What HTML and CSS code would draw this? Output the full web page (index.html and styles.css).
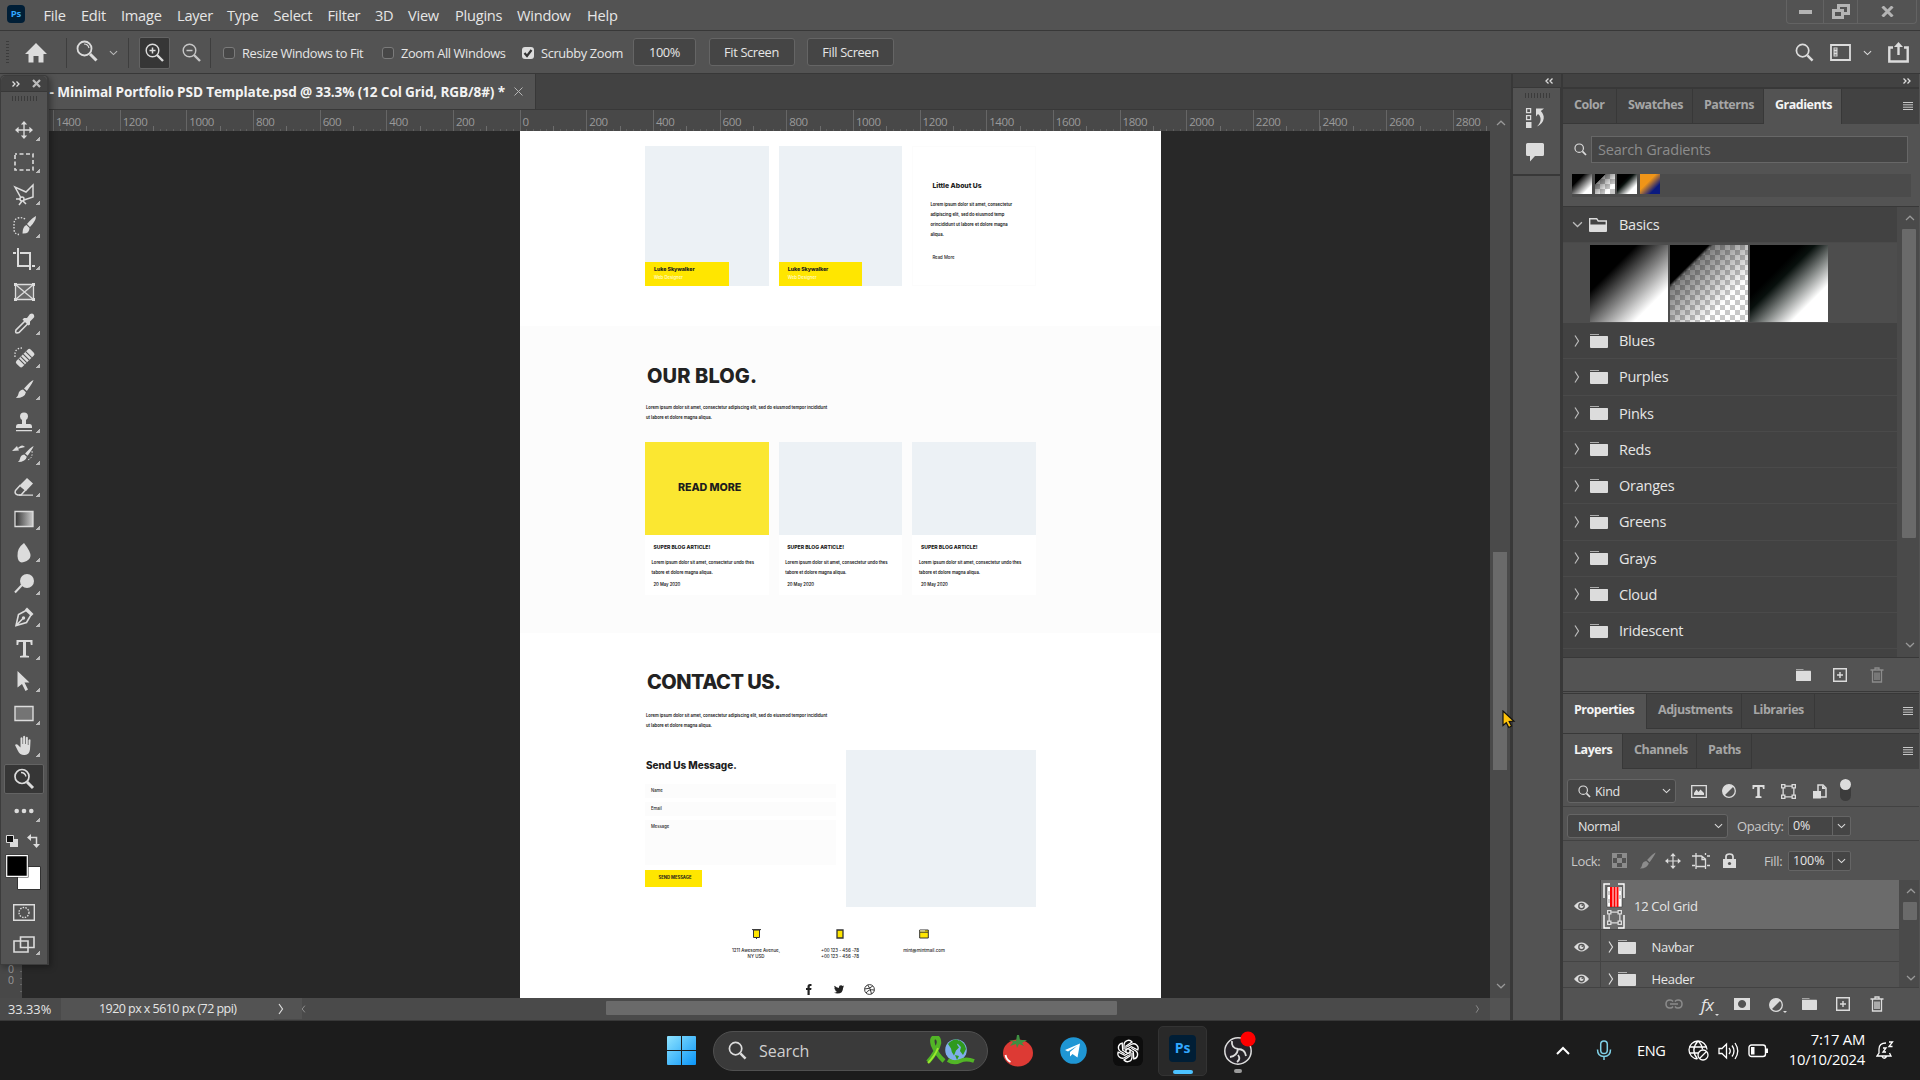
FILE: index.html
```html
<!DOCTYPE html>
<html lang="en">
<head>
<meta charset="utf-8">
<title>Photoshop</title>
<link rel="stylesheet" href="styles.css">
</head>
<body>
<svg class="defs" width="0" height="0">
  <defs>
    <symbol id="folder" viewBox="0 0 18 14"><path d="M0 0h9v1H0z" opacity=".7"/><path d="M0 2h17.500q.5 0 .5.500V13q0 1-1 1H1q-1 0-1-1z"/></symbol>
    <symbol id="folder-open" viewBox="0 0 18 14"><path d="M.7 8V.7h7l1.500 2.300h8.100v5" fill="none" stroke="currentColor" stroke-width="1.400"/><path d="M0 6.500h18V13q0 1-1 1H1q-1 0-1-1z"/></symbol>
    <symbol id="right" viewBox="0 0 6 12"><path d="M1 .5 4.500 6 1 11.500" fill="none" stroke="currentColor" stroke-width="1.200"/></symbol>
    <symbol id="down" viewBox="0 0 10 6"><path d="M1 1l4 3.800L9 1" fill="none" stroke="currentColor" stroke-width="1.200"/></symbol>
    <symbol id="up" viewBox="0 0 10 6"><path d="M1 5l4-3.800L9 5" fill="none" stroke="currentColor" stroke-width="1.200"/></symbol>
    <symbol id="lens" viewBox="0 0 20 20"><circle cx="8" cy="8" r="6.500" fill="none" stroke="currentColor" stroke-width="1.800"/><path d="M13 13l5.500 5.500" stroke="currentColor" stroke-width="2.600"/></symbol>
    <symbol id="menu" viewBox="0 0 10 8"><path d="M0 .5h10M0 2.800h10M0 5.200h10M0 7.500h10" stroke="currentColor"/></symbol>
    <symbol id="eye" viewBox="0 0 16 10"><path d="M0 5Q8-4.500 16 5 8 14.500 0 5z"/><circle cx="8" cy="5" r="3.600" fill="#535353"/><circle cx="8" cy="5" r="2.200"/><circle cx="8.800" cy="4" r="1" fill="#535353"/></symbol>
    <symbol id="plus" viewBox="0 0 14 14"><path d="M.7.7h12.600v12.600H.7zM7 4v6M4 7h6" fill="none" stroke="currentColor" stroke-width="1.400"/></symbol>
    <symbol id="trash" viewBox="0 0 14 16"><path d="M.5 3h13M5 3V1h4v2M2.500 3v12h9V3M5 5.500v7.500M7 5.500v7.500M9 5.500v7.500" fill="none" stroke="currentColor" stroke-width="1.300"/></symbol>
    <symbol id="half" viewBox="0 0 14 14"><circle cx="7" cy="7" r="6.300" fill="none" stroke="currentColor" stroke-width="1.300"/><path d="M2.500 11.500A6.300 6.300 0 0 1 11.500 2.500z"/></symbol>
    <symbol id="shape" viewBox="0 0 14 14"><path d="M2 2h10v10H2z" fill="none" stroke="currentColor" stroke-width="1.200"/><g fill="#535353" stroke="currentColor" stroke-width="1.200"><path d="M.6.6h3v3h-3zM10.400.6h3v3h-3zM.6 10.400h3v3h-3zM10.400 10.400h3v3h-3z"/></g></symbol>
    <symbol id="move" viewBox="0 0 20 20"><path d="M10 2v16M2 10h16" stroke="currentColor" stroke-width="1.500"/><path d="M10 0l3.500 4h-7zM10 20l3.500-4h-7zM0 10l4-3.500v7zM20 10l-4-3.500v7z"/></symbol>
    <symbol id="brush" viewBox="0 0 20 20"><path d="M19.500.5Q19 3 12.500 12L9.500 9.500Q16 2 19.500.5zM8.500 10.500l3 2.800q-1 6-10.500 6.200 2-1.500 2.500-4 .8-4.500 5-5z"/></symbol>
  </defs>
</svg>

<div class="app">
  <header class="menubar">
    <span class="ps-mini">Ps</span>
    <nav class="menu"><span>File</span><span>Edit</span><span>Image</span><span>Layer</span><span>Type</span><span>Select</span><span>Filter</span><span>3D</span><span>View</span><span>Plugins</span><span>Window</span><span>Help</span></nav>
    <div class="window-buttons">
      <span><svg width="13" height="4"><path d="M0 0h13v4H0z"/></svg></span>
      <span><svg width="18" height="15"><path d="M1.500 6.500h9v7h-9z M6.500 5V1.500h10v8h-5" fill="none" stroke="currentColor" stroke-width="3"/></svg></span>
      <span><svg width="13" height="11"><path d="M1.500.5l10 10M11.500.5l-10 10" stroke="currentColor" stroke-width="3"/></svg></span>
    </div>
  </header>

  <div class="options">
    <i class="grip"></i>
    <svg class="home" width="22" height="20" viewBox="0 0 22 20"><path d="M11 0l11 11h-3.500v8.500h-5V13h-5v6.500h-5V11H0z"/></svg>
    <i class="rule"></i>
    <svg class="tool-lens" width="22" height="22" viewBox="0 0 22 22"><circle cx="8.500" cy="8.500" r="7" fill="none" stroke="currentColor" stroke-width="1.800"/><path d="M14 14l6.500 6.500" stroke="currentColor" stroke-width="3"/><path d="M8 4q4 0 5 4" fill="none" stroke="currentColor" stroke-width="1.200"/></svg>
    <svg class="tool-chev" width="9" height="6"><use href="#down"/></svg>
    <i class="rule rule-b"></i>
    <span class="zoom-on"><svg width="19" height="19" viewBox="0 0 19 19"><circle cx="7.500" cy="7.500" r="6.300" fill="none" stroke="currentColor" stroke-width="1.400"/><path d="M12 12l6 6" stroke="currentColor" stroke-width="2.400"/><path d="M7.500 4.500v6M4.500 7.500h6" stroke="currentColor" stroke-width="1.500"/></svg></span>
    <svg class="zoom-out" width="19" height="19" viewBox="0 0 19 19"><circle cx="7.500" cy="7.500" r="6.300" fill="none" stroke="currentColor" stroke-width="1.400"/><path d="M12 12l6 6" stroke="currentColor" stroke-width="2.400"/><path d="M4.500 7.500h6" stroke="currentColor" stroke-width="1.500"/></svg>
    <i class="rule rule-c"></i>
    <div class="checks">
      <label><i class="box"></i><span>Resize Windows to Fit</span></label>
      <label><i class="box"></i><span>Zoom All Windows</span></label>
      <label><i class="box checked"><svg width="12" height="12"><path d="M2.500 6l2.500 3 4.500-6" fill="none" stroke="#333" stroke-width="2.200"/></svg></i><span>Scrubby Zoom</span></label>
    </div>
    <div class="btns"><span>100%</span><span>Fit Screen</span><span>Fill Screen</span></div>
    <div class="opt-right">
      <svg width="19" height="19"><use href="#lens"/></svg>
      <svg width="21" height="17"><path d="M1 1h19v15H1z" fill="none" stroke="currentColor" stroke-width="1.800"/><path d="M3.500 3.500h4v9h-4z" /><path d="M4.500 5h2M4.500 8h2M4.500 11h2" stroke="#535353"/></svg>
      <svg width="9" height="6"><use href="#down"/></svg>
      <svg width="21" height="21"><path d="M5 5.500H1.300v14h18.400v-14H16" fill="none" stroke="currentColor" stroke-width="2.400"/><path d="M10.500 3v10" stroke="currentColor" stroke-width="2.400"/><path d="M10.500 0l4.500 5H6z"/></svg>
    </div>
  </div>

  <main class="work">
    <section class="doc-area">
      <div class="doc-tabs"><div class="doc-tab"><span>- Minimal Portfolio PSD Template.psd @ 33.3% (12 Col Grid, RGB/8#) *</span><svg width="9" height="9"><path d="M.5.5l8 8M8.500.5l-8 8" stroke="#b5b5b5"/></svg></div></div>
      <div class="ruler">
        <div class="ticks"><span>1400</span><span>1200</span><span>1000</span><span>800</span><span>600</span><span>400</span><span>200</span><span>0</span><span>200</span><span>400</span><span>600</span><span>800</span><span>1000</span><span>1200</span><span>1400</span><span>1600</span><span>1800</span><span>2000</span><span>2200</span><span>2400</span><span>2600</span><span>2800</span></div>
      </div>
      <div class="v-scroll">
        <svg width="10" height="6"><use href="#up"/></svg><i></i><svg width="10" height="6"><use href="#down"/></svg>
      </div>
      <div class="v-ruler"><span>0</span><span>0</span></div>
      <div class="canvas">
        <div class="page">
          <section class="about">
            <article class="person"><div><b>Luke Skywalker</b><span>Web Designer</span></div></article>
            <article class="person"><div><b>Luke Skywalker</b><span>Web Designer</span></div></article>
            <article class="little"><h4>Little About Us</h4><p>Lorem ipsum dolor sit amet, consectetur<br>adipiscing elit, sed do eiusmod temp<br>orincididunt ut labore et dolore magna<br>aliqua.</p><a>Read More</a></article>
          </section>
          <section class="blog">
            <h2>OUR BLOG.</h2>
            <p class="lead">Lorem ipsum dolor sit amet, consectetur adipiscing elit, sed do eiusmod tempor incididunt<br>ut labore et dolore magna aliqua.</p>
            <div class="posts">
              <article><div class="pic hot">READ MORE</div><h5>SUPER BLOG ARTICLE!</h5><p>Lorem ipsum dolor sit amet, consectetur undo thes<br>tabore et dolore magna aliqua.</p><time>20 May 2020</time></article>
              <article><div class="pic"></div><h5>SUPER BLOG ARTICLE!</h5><p>Lorem ipsum dolor sit amet, consectetur undo thes<br>tabore et dolore magna aliqua.</p><time>20 May 2020</time></article>
              <article><div class="pic"></div><h5>SUPER BLOG ARTICLE!</h5><p>Lorem ipsum dolor sit amet, consectetur undo thes<br>tabore et dolore magna aliqua.</p><time>20 May 2020</time></article>
            </div>
          </section>
          <section class="contact">
            <h2>CONTACT US.</h2>
            <p class="lead">Lorem ipsum dolor sit amet, consectetur adipiscing elit, sed do eiusmod tempor incididunt<br>ut labore et dolore magna aliqua.</p>
            <div class="two">
              <form><h3>Send Us Message.</h3><div class="field">Name</div><div class="field">Email</div><div class="field tall">Message</div><span class="send">SEND MESSAGE</span></form>
              <div class="map"></div>
            </div>
            <div class="info">
              <div><svg width="9" height="10"><path d="M1.500 1h6v7.500h-6z" fill="#ffe600" stroke="#333"/><path d="M0 .6h9M4.500 8.500V10" stroke="#333"/></svg><span>1211 Awesome Avenue,<br>NY USD</span></div>
              <div><svg width="8" height="10"><path d="M1 1h6v8H1z" fill="#ffe600" stroke="#333" stroke-width="1.300"/></svg><span>+00 123 - 456 -78<br>+00 123 - 456 -78</span></div>
              <div><svg width="10" height="10"><path d="M.7 1h8.600v8H.7z" fill="#ffe600" stroke="#333"/><path d="M1 2h5" stroke="#fff"/><path d="M1 3.200h8" stroke="#333"/></svg><span>mint@mintmail.com</span></div>
            </div>
            <div class="social">
              <svg width="6" height="11" viewBox="0 0 6 11"><path d="M1.500 11V6H0V4h1.500V2.500Q1.500 0 4 0h1.500v2H4.500q-.8 0-.8.800V4h1.800l-.3 2H3.700v5z" fill="#222"/></svg>
              <svg width="10" height="9" viewBox="0 0 10 9"><path d="M.6.8q1.800 2 4.300 2.100Q4.700.2 7 .2q1 0 1.500.7L10 .4l-.8 1.300.8-.1-.9 1.100Q9 8.500 3.500 8.600 1.500 8.600 0 7.600q1.800 0 3-.9-1.400-.2-1.900-1.500h.8Q.3 4.600.3 3l.9.200Q-.2 2.200.6.8z" fill="#222"/></svg>
              <svg width="11" height="11" viewBox="0 0 11 11"><g fill="none" stroke="#222" stroke-width=".9"><circle cx="5.500" cy="5.500" r="4.900"/><path d="M3.700 1q3 3.500 3.800 8.900M.7 5Q6 5 8.700 2M2.200 9Q4.500 4.800 10.300 6"/></g></svg>
            </div>
          </section>
        </div>
      </div>
      <div class="status">
        <span class="pct">33.33%</span>
        <span class="dims">1920 px x 5610 px (72 ppi)</span>
        <svg class="st-r" width="28" height="21"><path d="M5 6l3.500 5L5 16" fill="none" stroke="currentColor" stroke-width="1.200"/></svg>
        <svg class="st-l" width="5" height="8" viewBox="0 0 6 12"><path d="M5 1 1 6l4 5" fill="none" stroke="#999" stroke-width="1.300"/></svg>
        <i class="h-thumb"></i>
        <svg class="st-e" width="5" height="8"><use href="#right"/></svg>
        <i class="corner"></i>
      </div>
    </section>

    <aside class="dock">
      <div class="strip"><svg width="8" height="6"><path d="M3.500.5L1 3l2.500 2.500M7.500.5L5 3l2.500 2.500" fill="none" stroke="#ddd" stroke-width="1.300"/></svg></div>
      <div class="dock-icons">
        <i class="grip-h"></i>
        <svg width="20" height="22" viewBox="0 0 20 22"><path d="M1.600 1.600h4v4h-4zM1.600 8.600h4v4h-4z" fill="none" stroke="currentColor" stroke-width="1.300"/><path d="M1 15h5.500v6H1z"/><path d="M11 1.500h8l-3.200 2.600q3.400 3.600 2.900 7.500-.7 5.400-6.700 7.900 4.300-4 3.500-8.500-.6-2.800-2.500-3.900L11 9.500z"/></svg>
        <svg width="20" height="19" viewBox="0 0 20 19"><path d="M2.500 0h15Q19 0 19 1.500v10q0 1.500-1.500 1.500H10l-5 5.500V13H2.500Q1 13 1 11.500v-10Q1 0 2.500 0z"/></svg>
      </div>
      <div class="dock-rest"></div>
    </aside>

    <aside class="panels">
      <div class="strip"><svg width="8" height="6"><path d="M.5.5L3 3 .5 5.500M4.500.5L7 3 4.500 5.500" fill="none" stroke="#ddd" stroke-width="1.300"/></svg></div>
      <div class="tabs t-grad"><span>Color</span><span>Swatches</span><span>Patterns</span><span class="act">Gradients</span><svg width="10" height="8"><use href="#menu"/></svg></div>
      <div class="search"><svg width="13" height="13"><use href="#lens"/></svg><span>Search Gradients</span></div>
      <div class="recent"><i class="g1"></i><i class="g2"></i><i class="g3"></i><i class="g4"></i></div>
      <div class="grad-list">
        <div class="rows">
          <div class="row open"><svg width="11" height="7"><use href="#down"/></svg><svg class="fo" width="18" height="14"><use href="#folder-open"/></svg><span>Basics</span></div>
          <div class="thumbs"><i class="g1"></i><i class="g2"></i><i class="g3"></i></div>
          <div class="row"><svg width="6" height="12"><use href="#right"/></svg><svg class="fo" width="18" height="14"><use href="#folder"/></svg><span>Blues</span></div>
          <div class="row"><svg width="6" height="12"><use href="#right"/></svg><svg class="fo" width="18" height="14"><use href="#folder"/></svg><span>Purples</span></div>
          <div class="row"><svg width="6" height="12"><use href="#right"/></svg><svg class="fo" width="18" height="14"><use href="#folder"/></svg><span>Pinks</span></div>
          <div class="row"><svg width="6" height="12"><use href="#right"/></svg><svg class="fo" width="18" height="14"><use href="#folder"/></svg><span>Reds</span></div>
          <div class="row"><svg width="6" height="12"><use href="#right"/></svg><svg class="fo" width="18" height="14"><use href="#folder"/></svg><span>Oranges</span></div>
          <div class="row"><svg width="6" height="12"><use href="#right"/></svg><svg class="fo" width="18" height="14"><use href="#folder"/></svg><span>Greens</span></div>
          <div class="row"><svg width="6" height="12"><use href="#right"/></svg><svg class="fo" width="18" height="14"><use href="#folder"/></svg><span>Grays</span></div>
          <div class="row"><svg width="6" height="12"><use href="#right"/></svg><svg class="fo" width="18" height="14"><use href="#folder"/></svg><span>Cloud</span></div>
          <div class="row"><svg width="6" height="12"><use href="#right"/></svg><svg class="fo" width="18" height="14"><use href="#folder"/></svg><span>Iridescent</span></div>
        </div>
        <div class="bar"><svg width="10" height="6"><use href="#up"/></svg><i></i><svg width="10" height="6"><use href="#down"/></svg></div>
      </div>
      <div class="grad-foot"><svg width="15" height="12" viewBox="0 0 18 14" preserveAspectRatio="none"><use href="#folder" width="18" height="14"/></svg><svg width="14" height="14"><use href="#plus"/></svg><svg class="dim" width="14" height="16"><use href="#trash"/></svg></div>
      <div class="tabs t-prop"><span class="act">Properties</span><span>Adjustments</span><span>Libraries</span><svg width="10" height="8"><use href="#menu"/></svg></div>
      <div class="tabs t-layers"><span class="act">Layers</span><span>Channels</span><span>Paths</span><svg width="10" height="8"><use href="#menu"/></svg></div>
      <div class="filter">
        <div class="select kind"><svg width="13" height="13"><use href="#lens"/></svg><span>Kind</span><svg width="9" height="6"><use href="#down"/></svg></div>
        <svg width="16" height="13"><path d="M.7.7h14.600v11.600H.7z" fill="none" stroke="currentColor" stroke-width="1.300"/><path d="M3 10V8l2.500-3.500 2 2.500 2-2.500L13 8v2z"/></svg>
        <svg width="14" height="14"><use href="#half"/></svg>
        <svg width="13" height="13"><path d="M.5 0h12v4H11L10.500 2H7.800v9l1.700.5V13h-6v-1.500l1.700-.5V2H2.500L2 4H.5z"/></svg>
        <svg width="15" height="15"><use href="#shape"/></svg>
        <svg width="14" height="15"><path d="M5 8V1h5l3 3v9H8" fill="none" stroke="currentColor" stroke-width="1.500"/><path d="M9 1v4h4M0 7h8v7.500H0z"/></svg>
        <span class="toggle"></span>
      </div>
      <div class="blend"><div class="select mode"><span>Normal</span><svg width="9" height="6"><use href="#down"/></svg></div><span class="lab">Opacity:</span><div class="num"><b>0%</b><svg width="9" height="6"><use href="#down"/></svg></div></div>
      <div class="locks">
        <span class="lab">Lock:</span>
        <svg class="dim" width="15" height="15"><path d="M.5.5h14v14H.5z" fill="none" stroke="currentColor"/><path d="M0 0h5v5H0zM10 0h5v5h-5zM5 5h5v5H5zM0 10h5v5H0zM10 10h5v5h-5z"/></svg>
        <svg class="dim" width="17" height="17"><use href="#brush"/></svg>
        <svg width="16" height="16"><use href="#move"/></svg>
        <svg width="18" height="16"><path d="M4 0v13.500h9.500V6l-4-3H0M0 12.500h3M15 12.500h3M13.500 0v2M15 3h3M10 3v3.500h3.500M4 14v2M13.500 14v2" fill="none" stroke="currentColor" stroke-width="1.300"/></svg>
        <svg width="13" height="15"><path d="M3 6V3.500Q3 1 6.500 1T10 3.500V6" fill="none" stroke="currentColor" stroke-width="1.700"/><path d="M0 6h13v9H0z"/><circle cx="6.500" cy="10.500" r="1.600" fill="#535353"/></svg>
        <span class="lab fill">Fill:</span><div class="num"><b>100%</b><svg width="9" height="6"><use href="#down"/></svg></div>
      </div>
      <div class="layers">
        <div class="layer-rows">
          <div class="layer sel"><span class="eye"><svg width="15" height="10"><use href="#eye"/></svg></span><div class="body">
            <svg class="lthumb" width="22" height="46"><path d="M1 15V1h6M15 1h6v14M1 32v13h6M15 45h6V32" fill="none" stroke="#fff" stroke-width="1.400"/><path d="M4 3.500h15v20.500H4z" fill="#fff" stroke="#333" stroke-width=".6"/><path d="M4 8h3v4H4zM4 16h3v4H4zM16 4h3v4h-3zM16 12h3v4h-3z" fill="#ccc"/><path d="M7 4h2.500v20H7zM10.500 4h2v20h-2zM13.500 4h2v20h-2z" fill="red"/><g transform="translate(4 27)"><use href="#shape" width="15" height="15"/></g></svg>
            <span>12 Col Grid</span></div></div>
          <div class="layer"><span class="eye"><svg width="15" height="10"><use href="#eye"/></svg></span><div class="body"><svg width="6" height="12"><use href="#right"/></svg><svg class="fo" width="18" height="14"><use href="#folder"/></svg><span>Navbar</span></div></div>
          <div class="layer last"><span class="eye"><svg width="15" height="10"><use href="#eye"/></svg></span><div class="body"><svg width="6" height="12"><use href="#right"/></svg><svg class="fo" width="18" height="14"><use href="#folder"/></svg><span>Header</span></div></div>
        </div>
        <div class="bar b2"><svg width="10" height="6"><use href="#up"/></svg><i></i><svg width="10" height="6"><use href="#down"/></svg></div>
      </div>
      <div class="layer-foot">
        <svg class="dim" width="18" height="10"><path d="M8 2.500Q7 1 5 1 1 1 1 5t4 4q2 0 3-1.500M10 2.500Q11 1 13 1q4 0 4 4t-4 4q-2 0-3-1.500M5 5h8" fill="none" stroke="currentColor" stroke-width="1.500"/></svg>
        <span class="fx more">fx</span>
        <svg width="16" height="12"><path fill-rule="evenodd" d="M0 0h16v12H0zM8 2a4 4 0 1 0 .1 0z"/></svg>
        <span class="more"><svg width="14" height="14"><use href="#half"/></svg></span>
        <svg width="15" height="12" viewBox="0 0 18 14" preserveAspectRatio="none"><use href="#folder" width="18" height="14"/></svg>
        <svg width="14" height="14"><use href="#plus"/></svg>
        <svg width="14" height="16"><use href="#trash"/></svg>
      </div>
    </aside>
  </main>

  <footer class="taskbar">
    <svg class="win" width="29" height="29" viewBox="0 0 29 29"><defs><linearGradient id="wg" x1="0" y1="0" x2="1" y2="1" gradientUnits="objectBoundingBox"><stop offset="0" stop-color="#8fe4ff"/><stop offset="1" stop-color="#0a95f8"/></linearGradient></defs><path d="M1 0h13v14H0V1q0-1 1-1zM15 0h13q1 0 1 1v13H15zM0 15h14v14H1q-1 0-1-1zM15 15h14v13q0 1-1 1H15z" fill="url(#wg)"/></svg>
    <div class="find"><svg width="19" height="19"><use href="#lens"/></svg><span>Search</span>
      <svg class="art" width="50" height="30" viewBox="0 0 50 30"><path d="M2 26Q11 16 13 7 13 1 9 1 5 2 7 9q4 10 11 16" fill="none" stroke="#52b526" stroke-width="4.500"/><path d="M2 27Q9 20 12 12" stroke="#9be82f" stroke-width="2" fill="none"/><circle cx="30" cy="14" r="10.800" fill="#7faeea"/><path d="M22 8q4-5 9-4.500l3 2-3 3 2 3-3 3-2 5q-3-4-3-7zM33 4q6 3 7 9l-3 6-3-4 1-4-3-3zM29 19l4 1-2 4z" fill="#2f9a1d"/><path d="M22 24q6 4 12 1t14 0" fill="none" stroke="#52b526" stroke-width="4"/></svg>
    </div>
    <span class="tb"><svg width="30" height="32" viewBox="0 0 30 32"><ellipse cx="15" cy="18" rx="15" ry="13.500" fill="#dd3a34"/><path d="M6 5l7 1 1-6h2l1 5 7 0-5 3 2 3-5-2-2 4-1-4-6 2 3-4z" fill="#3e8e41"/><path d="M2.500 20q1 5 5 7" stroke="#fff" stroke-width="1.800" fill="none"/></svg></span>
    <span class="tb"><svg width="27" height="27" viewBox="0 0 27 27"><circle cx="13.500" cy="13.500" r="13.300" fill="#1f96d4"/><path d="M5 13l15-6.500-2.500 14-5-3.500-2.500 2.500v-4.500l7-6-9 5.500z" fill="#fff"/></svg></span>
    <span class="tb"><svg width="30" height="30" viewBox="0 0 30 30"><rect width="30" height="30" rx="6" fill="#0d0d0d"/><g fill="none" stroke="#fff" stroke-width="1.300"><g id="petal"><path d="M11 13.500V8.500a4.500 4.500 0 0 1 8-2.500l-6 4v7"/></g><use href="#petal" transform="rotate(60 15 15)"/><use href="#petal" transform="rotate(120 15 15)"/><use href="#petal" transform="rotate(180 15 15)"/><use href="#petal" transform="rotate(240 15 15)"/><use href="#petal" transform="rotate(300 15 15)"/></g></svg></span>
    <span class="tb active"><b>Ps</b></span>
    <span class="tb obs"><svg width="34" height="36" viewBox="0 0 34 36"><circle cx="15" cy="20" r="13.200" fill="#262329" stroke="#ddd" stroke-width="1.500"/><g fill="none" stroke="#ddd" stroke-width="1.800"><path d="M9 10q-1 7 6 8 7 0 8 7M15 18q-1 7-8 8M15 24q3 4-1 7"/></g><circle cx="25" cy="8" r="7.600" fill="#f00"/></svg></span>
    <div class="tray">
      <svg width="14" height="9"><path d="M1 8l6-6 6 6" fill="none" stroke="#fff" stroke-width="2"/></svg>
      <svg width="16" height="21"><g fill="none" stroke="#7fd0e6" stroke-width="1.500"><rect x="4.700" y="1" width="6.600" height="12.500" rx="3.300"/><path d="M1.500 9.500q0 7 6.500 7t6.500-7M8 16.500V20"/></g></svg>
      <span>ENG</span>
      <svg width="21" height="21"><g fill="none" stroke="#fff" stroke-width="1.300"><path d="M19 9.500A9 9 0 1 0 9.500 19M1 7h18M1 13h9M10 1Q2 10 9.500 19M10 1q4 3.500 4.500 8.500"/><circle cx="15" cy="15" r="5"/><path d="M11.500 18.500l7-7"/></g></svg>
      <svg width="21" height="18"><path d="M1 6.500h3L8.500 2v14L4 11.500H1zM11 6q2.500 3 0 6M14 3.500q4 5.500 0 11M17 1q5.500 8 0 16" fill="none" stroke="#fff" stroke-width="1.300"/></svg>
      <svg width="21" height="14"><rect x="1" y="1" width="16.500" height="11.500" rx="2.500" fill="none" stroke="#fff" stroke-width="1.400"/><path d="M3 3h3.500v7.500H3zM18 4.500h2v4.500h-2z" fill="#fff"/></svg>
      <div class="clock"><span>7:17 AM</span><span>10/10/2024</span></div>
      <svg width="18" height="19" viewBox="0 0 18 19"><path d="M10 2Q3 2 3 8v4l-2 3h14l-1.500-3M6 15.500q2 3.500 4.500 0M7 7h3l-3 4h3M13 1h3.500L13 5.500h3.500" fill="none" stroke="#fff" stroke-width="1.300"/></svg>
    </div>
  </footer>
</div>

<div class="toolbox">
  <div class="tb-head"><svg width="8" height="6"><path d="M.5.5L3 3 .5 5.500M4.500.5L7 3 4.500 5.500" fill="none" stroke="#ddd" stroke-width="1.300"/></svg><svg width="9" height="9"><path d="M1 1l7 7M8 1L1 8" stroke="#bbb" stroke-width="2.200"/></svg></div>
  <i class="grip-h"></i>
  <div class="tools">
    <span class="t"><svg viewBox="0 0 24 24"><use href="#move" x="3" y="3" width="18" height="18"/></svg></span>
    <span class="t"><svg viewBox="0 0 24 24"><path d="M3 4h18v16H3z" fill="none" stroke="currentColor" stroke-width="1.600" stroke-dasharray="4 2.500" stroke-dashoffset="2"/></svg></span>
    <span class="t"><svg viewBox="0 0 24 24"><g fill="none" stroke="currentColor" stroke-width="1.500"><path d="M9 15L3 4l11 5 7-7v12l-9 3"/><circle cx="10" cy="16" r="2"/><path d="M8 16H4M10 18l-3 4M11 18l3 3"/></g></svg></span>
    <span class="t"><svg viewBox="0 0 24 24"><path d="M13 4Q10 2 6 3 2 4 2 9v5q0 5 5 5.500" fill="none" stroke="currentColor" stroke-width="1.400" stroke-dasharray="1.500 1.500"/><path d="M24 1q0 5-6 11l-3-3q6-7 9-8zM14.500 10l3 3q0 6-7 5.500 0-7 4-8.500z"/></svg></span>
    <span class="t"><svg viewBox="0 0 24 24"><path d="M6 0v18h12M1 5h3M8 5h10v17M20 18h3" fill="none" stroke="currentColor" stroke-width="2"/></svg></span>
    <span class="t no"><svg viewBox="0 0 24 24"><path d="M3.500 4.500h18v15h-18zM3.500 4.500l18 15M21.500 4.500l-18 15" fill="#6a6a6a" stroke="currentColor" stroke-width="1.300"/><path d="M2 3h3v3H2zM20 3h3v3h-3zM2 18h3v3H2zM20 18h3v3h-3z"/></svg></span>
    <span class="t"><svg viewBox="0 0 24 24"><path d="M13 9l-9 9q-1 3 1 3l2-.5 9-9" fill="none" stroke="currentColor" stroke-width="1.600"/><path d="M12 6l3 0 3-4q3-1.500 4 1 1 2-1 3.500L18 9.500v3l-1.500 1-6-6z"/></svg></span>
    <span class="t"><svg viewBox="0 0 24 24"><path d="M3 12q-1-9 7-9" fill="none" stroke="currentColor" stroke-dasharray="1.500 1.500" stroke-width="1.300"/><g transform="rotate(-45 13 13)"><rect x="3" y="9" width="20" height="8.500" rx="2"/><path d="M8 9v8.500M18 9v8.500M11 9v8.500M14.500 9v8.500" stroke="#535353" stroke-width="1.100"/></g></svg></span>
    <span class="t"><svg viewBox="0 0 24 24"><use href="#brush" x="3" y="2" width="19" height="20"/></svg></span>
    <span class="t"><svg viewBox="0 0 24 24"><path d="M12 2.500a4 4 0 0 1 4 4q0 2-2 3.500v4h4q2 0 2 2.500V18H4v-1.500Q4 14 6 14h4v-4Q8 8.500 8 6.500a4 4 0 0 1 4-4zM4 20h16v1.300H4z"/></svg></span>
    <span class="t"><svg viewBox="0 0 24 24"><use href="#brush" x="5" y="2" width="17" height="20"/><path d="M0 9l5-5 2 4.500zM5 7q5-6 8-2" /><path d="M20 9q1 8-5 9" fill="none" stroke="currentColor" stroke-dasharray="1.500 1.500"/></svg></span>
    <span class="t"><svg viewBox="0 0 24 24"><path d="M3.500 15.500l4.500-5 5.500 4.500-4.500 5H6q-4-1-2.500-4.500z" fill="none" stroke="currentColor" stroke-width="1.500"/><path d="M8 10l7-7 6 5.500-7 7.500zM7 19.500h14v1.300H7z"/></svg></span>
    <span class="t"><svg viewBox="0 0 24 24"><defs><linearGradient id="tg"><stop offset="0" stop-color="#333"/><stop offset="1" stop-color="#ccc"/></linearGradient></defs><path d="M3 4.500h18v15H3z" fill="url(#tg)" stroke="currentColor" stroke-width="1.300"/></svg></span>
    <span class="t"><svg viewBox="0 0 24 24"><path d="M12 3q7 9 6.500 13T12 22t-6.500-6T12 3z"/></svg></span>
    <span class="t"><svg viewBox="0 0 24 24"><circle cx="15" cy="9" r="7"/><path d="M10 13l-7 7.500" stroke="currentColor" stroke-width="2"/></svg></span>
    <span class="t"><svg viewBox="0 0 24 24"><path d="M14 5.500L6.500 9.500 4 20.500l10.500-3L19 10zM4.500 20l6-6" fill="none" stroke="currentColor" stroke-width="1.600"/><circle cx="11.500" cy="13" r="1.700"/><path d="M15 2.500l6.500 6.500-2 2L13 4.500z"/></svg></span>
    <span class="t"><svg viewBox="0 0 24 24"><path d="M4.500 3h16v5h-1.700l-.5-3H14v13.500l3 .5v1.500H8V19l3-.5V5H6.700l-.5 3H4.500z"/></svg></span>
    <span class="t"><svg viewBox="0 0 24 24"><path d="M5.500 2l12 11.500h-5l3.500 7-2.500 1.500-3.500-7-4.500 3.500z"/></svg></span>
    <span class="t"><svg viewBox="0 0 24 24"><path d="M3 4.500h18v14H3z" fill="#747474" stroke="currentColor" stroke-width="1.400"/></svg></span>
    <span class="t"><svg viewBox="0 0 24 24"><path d="M3 11q1.500-1.500 3.500.5l2 2V4q1-1.500 2 0v6h.6V2.500q1.200-1.500 2 0V10h.7V3.500q1.200-1.500 2 0V11h.7V6q1.500-1.500 2 0-.2 6-.5 9.500-.7 5-5 5.500-5 .5-7-4z"/></svg></span>
    <span class="t no current"><svg viewBox="0 0 24 24"><circle cx="10" cy="9.500" r="7" fill="none" stroke="currentColor" stroke-width="1.700"/><path d="M15 15l6 6" stroke="currentColor" stroke-width="3"/><path d="M9 5.500q4 0 5 4" fill="none" stroke="currentColor" stroke-width="1.300"/></svg></span>
    <span class="t"><svg viewBox="0 0 24 24"><circle cx="4.700" cy="12" r="2.300"/><circle cx="12" cy="12" r="2.300"/><circle cx="19.300" cy="12" r="2.300"/></svg></span>
  </div>
  <svg class="colors" width="48" height="64" viewBox="0 0 48 64"><path d="M10 10h8v8h-8z"/><path d="M6.500 6.500h7v7h-7z" fill="#111" stroke="#ddd"/><path d="M30 8.500h6.500V15" fill="none" stroke="currentColor" stroke-width="1.500"/><path d="M27 8.500l4-3.500v7zM36.500 19l-3.500-4h7z"/><path d="M17.500 37.500h23v23h-23z" fill="#fff" stroke="#333"/><path d="M5.500 25.500h23v23h-23z" fill="#333"/><path d="M6.700 26.700h20.600v20.600H6.700z" fill="#000" stroke="#fff" stroke-width="1.200"/></svg>
  <svg class="qm" width="22" height="17"><path d="M.7.7h20.600v15.600H.7z" fill="none" stroke="currentColor" stroke-width="1.400"/><circle cx="11" cy="8.500" r="5" fill="none" stroke="currentColor" stroke-dasharray="1.500 1.200" stroke-width="1.400"/></svg>
  <span class="t scr"><svg width="22" height="17" viewBox="0 0 22 17"><path d="M1 5h14v11H1zM7.500 1H21v10.500H7.500z" fill="#535353" stroke="currentColor" stroke-width="1.600"/></svg></span>
</div>
<svg class="cursor" width="14" height="20" viewBox="0 0 14 20"><path d="M1 1v14.500l3.300-2.800 2.500 4.800 2.700-1.400L7.200 11.500l4.800-.3z" fill="#ffc30b" stroke="#111" stroke-width="1.200"/></svg>
</body>
</html>
```
FILE: styles.css
```css
* { box-sizing: border-box; }
html, body { margin: 0; height: 100%; overflow: hidden; background: #1c1c1c; }
body { position: relative; font-family: "Open Sans", "Noto Sans", sans-serif; font-size: 13px; color: #e6e6e6; }
svg { display: block; fill: currentColor; color: #dcdcdc; flex: none; }
.defs { position: absolute; }
i { font-style: normal; display: block; flex: none; }
span { white-space: nowrap; }
.dim { color: #8c8c8c; }

.app { width: 1920px; height: 1080px; display: grid; grid-template-rows: 31px 43px 947px 59px; background: #535353; }

/* menu bar */
.menubar { display: flex; align-items: center; border-bottom: 1px solid #383838; }
.ps-mini { margin-left: 7px; width: 18px; height: 18px; border-radius: 4px; background: #001e36; color: #31a8ff; font-size: 9.500px; line-height: 17px; font-weight: 700; text-align: center; margin-bottom: 2px; }
.menu { margin-left: 18.500px; display: grid; grid-template-columns: 37.500px 40px 56px 50px 46.500px 54px 47.500px 33px 47px 62px 70px 40px; font-size: 14.600px; letter-spacing: -.24px; line-height: 29px; }
.window-buttons { margin: 0 3px 6px auto; height: 24px; display: grid; grid-template-columns: 36px 34px 59px; border: 1px solid #636363; border-top: 0; border-radius: 0 0 4px 4px; }
.window-buttons span { display: grid; place-items: center; }
.window-buttons span + span { border-left: 1px solid #636363; }
.window-buttons svg { color: #b4b4b4; }

/* options bar */
.options { display: flex; align-items: center; border-bottom: 1px solid #383838; padding-top: 1px; }
.grip { width: 3px; height: 24px; margin-left: 6px; background: repeating-linear-gradient(#3c3c3c 0 1px, #535353 1px 3px); }
.home { margin-left: 15.500px; }
.rule { width: 1px; height: 30px; background: #3e3e3e; margin-left: 19px; }
.tool-lens { margin: 0 0 3px 9.500px; }
.tool-chev { margin-left: 10.500px; color: #bbb; }
.rule-b { margin-left: 10.500px; }
.zoom-on { margin-left: 10px; width: 31px; height: 32px; background: #363636; border: 1px solid #636363; border-radius: 2px; display: grid; place-items: center; }
.zoom-out { margin-left: 11.500px; color: #c6c6c6; }
.rule-c { margin-left: 9.500px; }
.checks { margin-left: 12px; display: grid; grid-template-columns: 159px 140px 111px; font-size: 12.800px; letter-spacing: -.35px; }
.checks label { display: flex; align-items: center; gap: 7px; }
.box { width: 12px; height: 12px; border: 1px solid #7b7b7b; border-radius: 3px; background: #474747; }
.box.checked { background: #dcdcdc; border: 0; }
.btns { display: grid; grid-template-columns: 63px 86px 87px; gap: 12.500px; font-size: 12.800px; letter-spacing: -.35px; margin-bottom: 1px; }
.btns span { height: 28px; line-height: 26px; text-align: center; background: #454545; border: 1px solid #656565; border-radius: 3px; }
.opt-right { margin-left: auto; display: flex; align-items: center; margin-right: 11px; }
.opt-right svg:nth-child(2) { margin-left: 16px; }
.opt-right svg:nth-child(3) { margin: 0 16px 0 12px; }

/* work area */
.work { display: grid; grid-template-columns: 1511px 50px 359px; background: #383838; min-height: 0; padding-bottom: 1px; }
.doc-area { display: grid; grid-template-columns: 22px 1468px 21px; grid-template-rows: 36px 21px 867px 22px; background: #424242; }
.doc-tabs { grid-column: 1 / 4; border-bottom: 1px solid #383838; display: flex; }
.doc-tab { width: 536px; background: #535353; border-right: 1px solid #383838; display: flex; align-items: center; justify-content: flex-end; gap: 9px; padding: 0 12px 0 0; font-weight: 700; font-size: 13.600px; letter-spacing: -.13px; color: #f2f2f2; }
.ruler { grid-column: 1 / 3; background: #484848; padding-left: 53px; margin-left: -22px; overflow: hidden; }
.ticks { display: grid; grid-template-columns: repeat(22, 66.667px); height: 21px; background:
  repeating-linear-gradient(90deg, #6c6c6c 0 1px, transparent 1px 33.333px) 0 100% / 100% 5px no-repeat,
  repeating-linear-gradient(90deg, #5f5f5f 0 1px, transparent 1px 6.667px) 0 100% / 100% 2px no-repeat; }
.ticks span { border-left: 1px solid #666; padding-left: 2px; font-size: 11.500px; letter-spacing: -.4px; line-height: 23px; color: #9a9a9a; }
.ruler { margin-left: 0; }
.v-scroll { grid-row: 2 / 4; grid-column: 3; background: #4a4a4a; border-right: 1px solid #383838; display: grid; grid-template-rows: 26px 416px 218px 1fr 24px; justify-items: center; align-items: center; }
.v-scroll svg { color: #999; margin-left: 2px; }
.v-scroll svg:last-child { grid-row: 5; }
.v-scroll i { grid-row: 3; width: 14px; height: 218px; background: #6a6a6a; }
.v-ruler { background: #484848; display: flex; flex-direction: column; justify-content: flex-end; padding: 0 0 12px 8px; font-size: 10.500px; line-height: 11px; color: #9a9a9a; background-image: repeating-linear-gradient(#666 0 1px, transparent 1px 6.667px); background-size: 2px 100%; background-position: 20px 0; background-repeat: no-repeat; }
.canvas { background: #282828; overflow: hidden; padding-left: 498px; }
.status { grid-column: 1 / 4; background: #4a4a4a; display: grid; grid-template-columns: 61px 213px 28px 304px 511px 357px 16px 21px; align-items: center; padding-bottom: 1px; }
.pct { padding-left: 8px; font-size: 12.800px; letter-spacing: 0; line-height: 18px; margin-top: -1px; }
.dims { padding-left: 38px; font-size: 12.500px; letter-spacing: -.55px; line-height: 22px; align-self: stretch; background: #535353; }
.st-r { background: #535353; align-self: stretch; }
.st-l { margin-left: -1px; }
.h-thumb { height: 14px; background: #6a6a6a; margin-top: -3px; border-radius: 1px; }
.st-e { color: #999; grid-column: 7; margin-left: 1px; }
.corner { background: #535353; align-self: stretch; border-right: 1px solid #383838; }

/* page on the canvas */
.page { width: 640.500px; height: 867px; background: #fff; color: #1d1d1d; font-family: Inter, sans-serif; font-size: 4.200px; line-height: 10px; overflow: hidden; }
.page h2, .page h3, .page h4, .page h5, .page p { margin: 0; white-space: nowrap; }
.page p { font-weight: 600; color: #111; letter-spacing: -.005px; }
.about { height: 195px; padding: 14.700px 125px 0; display: grid; grid-template-columns: repeat(3, 123.700px); grid-template-rows: 140px; gap: 10px; }
.person { background: #ecf1f5; display: flex; align-items: flex-end; }
.person div { width: 83.700px; height: 23.500px; background: #ffe600; padding: 3px 0 0 9px; }
.person b { display: block; font-size: 5.300px; font-weight: 800; line-height: 9px; letter-spacing: -.05px; }
.person span { display: block; color: #fffbd0; line-height: 8px; font-size: 4.300px; font-weight: 500; }
.little { border: 1px solid #fcfcfc; padding: 33.500px 0 0 17px; }
.little h4 { font-size: 6.800px; font-weight: 800; line-height: 12px; padding-left: 2px; }
.little p { margin-top: 8px; letter-spacing: .01px; }
.little a { display: block; margin-top: 12.500px; padding-left: 2px; font-size: 4.300px; font-weight: 500; }
.blog { height: 307px; background: #fcfcfc; padding: 36px 0 0 125px; }
.page h2 { font-size: 20px; line-height: 28px; font-weight: 800; padding-left: 2px; letter-spacing: -.55px; color: #222; }
.page .blog h2 { letter-spacing: .1px; }
.lead { padding: 13px 0 0 1px; }
.posts { display: grid; grid-template-columns: repeat(3, 123.700px); gap: 10px; margin-top: 18.500px; }
.posts article { height: 153px; background: #fff; }
.pic { height: 93.500px; background: #ecf1f5; }
.hot { background: #fbe731; font-size: 10.700px; font-weight: 800; line-height: 92px; padding-left: 33px; letter-spacing: -.08px; }
.posts h5 { font-size: 5.100px; font-weight: 800; padding: 7px 0 0 8.500px; }
.posts p { padding: 6px 0 0 6.500px; }
.posts time { display: block; padding: 2px 0 0 8.500px; font-size: 4.200px; font-weight: 600; }
.contact { padding: 35px 0 0 125px; }
.contact .lead { padding-top: 15px; }
.two { display: grid; grid-template-columns: 191px 190.500px; gap: 9.500px; margin-top: 19px; }
.map { background: #ecf1f5; height: 157px; }
.two h3 { font-size: 10px; line-height: 14px; font-weight: 800; padding: 8px 0 11.500px 1px; letter-spacing: -.05px; }
.field { height: 14.500px; background: #fcfcfc; margin-bottom: 3.700px; padding: 2.500px 0 0 6px; font-weight: 500; }
.tall { height: 45px; margin-bottom: 5px; }
.send { display: block; width: 57px; height: 17px; background: #ffe600; font-weight: 700; font-size: 4.200px; line-height: 15.500px; text-align: center; padding-left: 3px; }
.info { display: grid; grid-template-columns: 84px 84px 84px; margin: 22px 0 0 69px; line-height: 6.700px; text-align: center; font-weight: 500; font-size: 4.400px; }
.info div { display: flex; flex-direction: column; align-items: center; gap: 8.500px; }
.social { display: flex; align-items: center; gap: 22px; margin: 23px 0 0 160.500px; }
.social svg:last-child { margin-left: -2px; }

/* collapsed dock */
.dock { display: grid; grid-template-rows: 14px 87px 1fr; margin-left: 2px; }
.strip { background: #424242; display: flex; justify-content: flex-end; align-items: center; padding: 0 8px 0 0; border-bottom: 1px solid #383838; }
.dock-icons { background: #535353; border-right: 1px solid #383838; border-bottom: 1px solid #383838; padding: 5px 0 0 12px; }
.dock-icons svg { margin-top: 9px; }
.dock-icons svg:last-child { margin-top: 14px; }
.grip-h { width: 25px; height: 5px; background: repeating-linear-gradient(90deg, #3b3b3b 0 1px, #535353 1px 3px); }
.dock-rest { margin-top: 1px; background: #535353; border-right: 1px solid #383838; }

/* panels */
.panels { margin-left: 1px; padding-right: 1px; display: grid; grid-template-rows: 14px 36px 50px 32px 452px 35px 39px 36px 39px 34px 39px 108px 1fr; background: #535353; border-left: 1px solid #383838; min-height: 0; }
.tabs { display: grid; background: #424242; font-weight: 700; font-size: 12.500px; letter-spacing: -.48px; color: #a6a6a6; line-height: 31px; border-top: 1px solid #383838; align-self: start; height: 36px; }
.tabs > span { border-right: 1px solid #383838; border-bottom: 1px solid #383838; padding-left: 11px; height: 35px; }
.tabs .act { background: #535353; color: #f4f4f4; border-bottom: 0; }
.tabs svg { justify-self: end; align-self: center; margin: 0 6px 1px 0; color: #c8c8c8; }
.t-grad { grid-template-columns: 54px 76px 71px 78px 1fr; line-height: 32px; }
.t-prop { grid-template-columns: 84px 95px 73px 1fr; border-bottom: 1px solid #383838; }
.t-layers { grid-template-columns: 60px 74px 55px 1fr; margin-top: 1px; }
.search { display: grid; grid-template-columns: 17px 317px; align-items: center; padding: 1px 0 0 11px; }
.search span { height: 27px; background: #454545; border: 1px solid #676767; font-size: 14.500px; letter-spacing: -.2px; line-height: 25px; padding-left: 6px; color: #8c8c8c; }
.recent { height: 23px; margin: 0 8px 0 9px; background: #4b4b4b; display: flex; gap: 2.700px; }
.recent i { width: 20px; height: 20px; }
.g1 { background: linear-gradient(135deg, #000 30%, #fff 78%); }
.g2 { background: linear-gradient(135deg, #000 25%, rgba(0,0,0,.5) 28%, transparent 72%), repeating-conic-gradient(#fff 0 25%, #c8c8c8 0 50%) 0 0 / 10px 10px; }
.g3 { background: linear-gradient(135deg, #000 33%, #08100d 42%, #fff 76%); }
.g4 { background: linear-gradient(135deg, #f09518 40%, #0a1a80 75%); }
.grad-list { display: grid; grid-template-columns: 334px 1fr; border-top: 1px solid #383838; border-bottom: 1px solid #383838; overflow: hidden; }
.rows { background: #424242; display: grid; grid-template-rows: 36px 80px repeat(9, 36.250px); }
.row { display: grid; grid-template-columns: 15.500px 29.500px 1fr; align-items: center; padding-left: 11px; border-bottom: 1px solid #4a4a4a; font-size: 14.500px; letter-spacing: -.25px; }
.row.open { padding-left: 9px; grid-template-columns: 17px 30px 1fr; }
.row svg:first-child { color: #bbb; }
.thumbs { background: #4d4d4d; display: flex; gap: 2px; padding: 2px 0 0 27px; }
.thumbs i { width: 78px; height: 77px; }
.bar { background: #4a4a4a; display: grid; grid-template-rows: 22px 309px 1fr 24px; justify-items: center; align-items: center; }
.bar svg { color: #999; margin-left: 4px; }
.bar i { width: 14px; height: 100%; background: #6a6a6a; border-radius: 1px; margin-left: 1px; }
.bar svg:last-child { grid-row: 4; }
.grad-foot { display: flex; align-items: center; gap: 22.300px; padding-left: 233px; border-bottom: 1px solid #383838; height: 34px; }
.filter { display: grid; grid-template-columns: 124px 30.500px 30px 29.500px 31.500px 27.500px 20px; align-items: center; padding: 8px 0 0 4px; border-bottom: 1px solid #424242; }
.select { height: 24px; background: #454545; border: 1px solid #656565; border-radius: 3px; display: flex; align-items: center; font-size: 12.500px; letter-spacing: -.3px; padding-left: 10px; }
.select svg:last-child { margin-left: auto; margin-right: 4px; }
.kind { width: 109px; }
.kind span { margin-left: 4px; }
.toggle { width: 11px; height: 22px; border-radius: 6px; background: #3c3c3c; display: block; margin-bottom: 2px; }
.toggle::before { content: ""; display: block; width: 11px; height: 11px; border-radius: 50%; background: #dcdcdc; }
.blend { display: grid; grid-template-columns: 170px 51px 64px; align-items: center; padding: 5px 0 0 4px; border-bottom: 1px solid #424242; }
.mode { width: 161px; }
.lab { color: #c9c9c9; font-size: 13px; letter-spacing: -.35px; }
.num { width: 63px; height: 20px; background: #454545; border: 1px solid #656565; border-radius: 2px; display: grid; grid-template-columns: 44px 1fr; align-items: center; }
.num b { font-weight: 400; font-size: 12.500px; letter-spacing: -.1px; line-height: 18px; border-right: 1px solid #656565; padding-left: 4px; }
.num svg { justify-self: center; }
.locks { display: grid; grid-template-columns: 41px 27px 26px 27px 31px 41px 24px 64px; align-items: center; padding-left: 8px; }
.layers { display: grid; grid-template-columns: 336px 1fr; overflow: hidden; border-bottom: 1px solid #424242; }
.layer-rows { display: grid; grid-template-rows: 50px 32px 33px; }
.layer { display: grid; grid-template-columns: 38px 1fr; border-bottom: 1px solid #444; }
.eye { display: grid; place-items: center; border-right: 1px solid #444; padding-top: 3px; }
.body { display: grid; grid-template-columns: 10px 33.500px 1fr; align-items: center; padding: 3px 0 0 7px; font-size: 13px; letter-spacing: -.3px; }
.last .eye, .last .body { padding-top: 1px; }
.sel .body { background: #6b6b6b; grid-template-columns: 31px 1fr; padding: 2px 0 0 2px; }
.b2 { grid-template-rows: 22px 18px 1fr 34px; }
.layer-foot { display: grid; grid-template-columns: 36px 33px 35px 33px 33.500px 34px 14px; align-items: center; padding-left: 102px; }
.fx { font: italic 17px/20px "Open Sans", sans-serif; letter-spacing: -.5px; }
.more::after { content: ""; display: block; width: 0; height: 0; margin: -1px 0 -3px 14px; border: 2px solid transparent; border-top-color: #ddd; border-bottom: 0; }

/* taskbar */
.taskbar { background: #1c1c1c; display: flex; align-items: center; }
.win { margin-left: 667px; }
.find { margin-left: 17px; width: 275px; height: 40px; border-radius: 20px; background: #3a3a3a; border: 1px solid #505050; display: flex; align-items: center; padding-left: 14px; }
.find span { font-size: 16px; letter-spacing: -.05px; margin-left: 12px; color: #d0d0d0; }
.art { margin-left: auto; margin-right: 11px; }
.tb { width: 48px; display: grid; place-items: center; flex: none; }
.tb:nth-child(3) { margin-left: 6px; }
.tb:nth-child(4), .tb:nth-child(5) { margin-left: 7px; }
.tb.active { margin-left: 6px; width: 49px; height: 50px; background: #292929; border: 1px solid #333; border-radius: 5px; grid-template-rows: 43px 4px; }
.active b { width: 27px; height: 27px; border-radius: 4px; background: #001e36; color: #31a8ff; font-size: 14px; line-height: 25px; text-align: center; }
.active::after { content: ""; width: 20px; height: 4px; border-radius: 2px; background: #4cc2ff; }
.obs { margin-left: 8.500px; grid-template-rows: 40px 4px; height: 54px; align-content: center; }
.obs::after { content: ""; width: 8px; height: 4px; border-radius: 2px; background: #9a9a9a; margin-right: 3px; }
.tray { margin-left: auto; display: grid; grid-template-columns: 39.500px 41.500px 51px 30px 30px 30px 87px 1fr; align-items: center; margin-right: 6px; width: 358px; }
.tray > span { font-size: 14.500px; letter-spacing: -.3px; color: #fff; }
.clock { font-size: 14.800px; letter-spacing: -.22px; line-height: 20px; color: #fff; display: grid; width: 87px; justify-items: end; margin-bottom: 3px; }
.tray svg:last-child { margin-left: 11px; }

/* floating toolbox */
.toolbox { position: absolute; left: 0; top: 75px; width: 49px; height: 890px; background: #535353; border: 1px solid #3c3c3c; border-width: 1px 2px 1px 1px; border-radius: 5px 5px 0 0; box-shadow: 2px 2px 6px rgba(0,0,0,.35); display: flex; flex-direction: column; }
.tb-head { height: 16px; background: #424242; border-bottom: 1px solid #383838; border-radius: 5px 5px 0 0; display: flex; align-items: center; justify-content: space-between; padding: 0 6px 0 11px; flex: none; }
.toolbox > .grip-h { margin: 4px 0 0 11px; }
.tools { display: grid; grid-auto-rows: 32.460px; margin-top: 12.500px; }
.t { display: grid; align-items: center; padding-left: 11px; background: linear-gradient(135deg, transparent 50%, #bbb 50%) 35px 23px / 4px 4px no-repeat; }
.t > svg { width: 24px; height: 24px; }
.no { background: none; }
.current { background: #363636; border: 1px solid #636363; border-radius: 2px; margin: 1px 3px; padding-left: 7px; }
.colors { margin: 2px 0 0 -1px; }
.qm { margin: 11px 0 0 12px; }
.scr { margin-top: 7px; height: 33px; }
.scr > svg { width: 22px; height: 17px; margin-left: 1px; }

.cursor { position: absolute; left: 1502px; top: 710px; }
```
